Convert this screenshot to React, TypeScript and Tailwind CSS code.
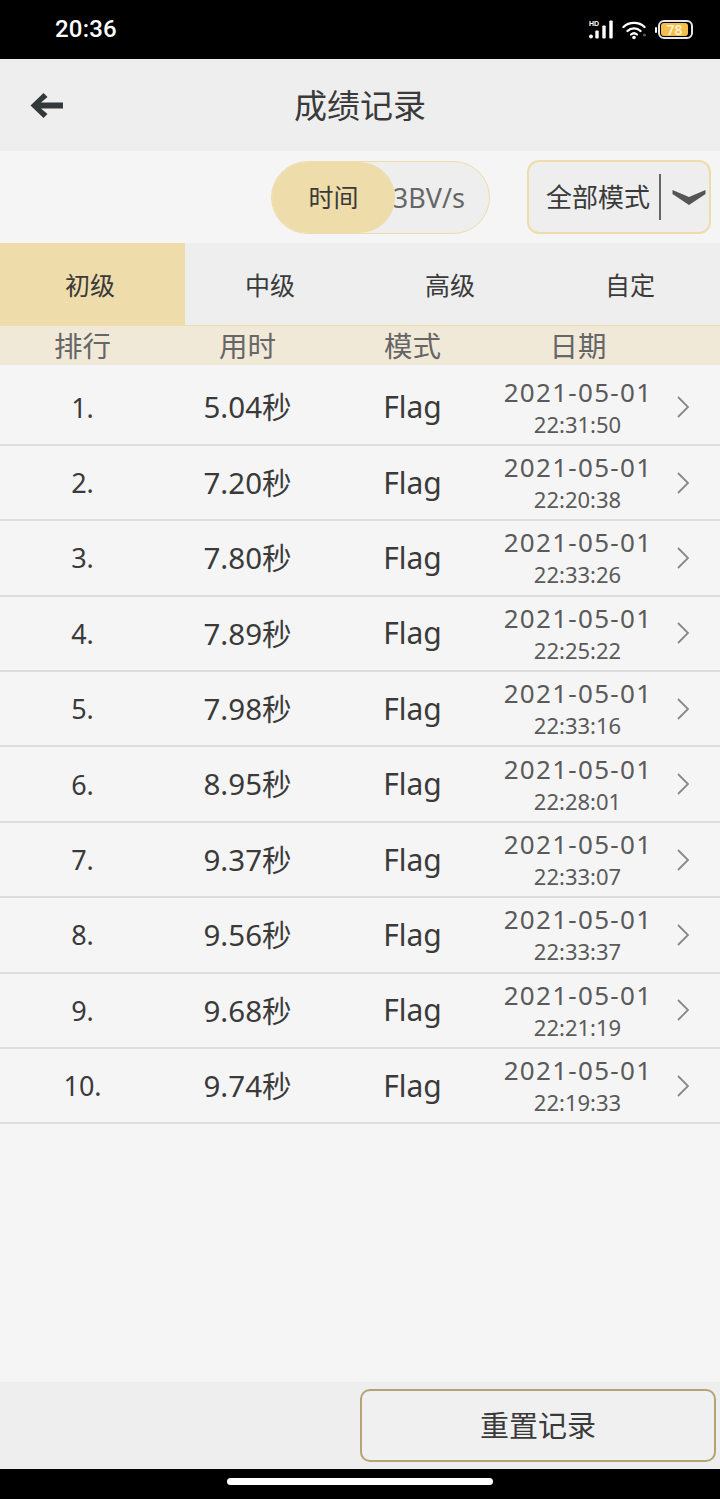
const font = { fontFamily: '"Noto Sans", "Noto Sans CJK SC", sans-serif' };

const rows = [
  ["1.", "5.04秒", "22:31:50"],
  ["2.", "7.20秒", "22:20:38"],
  ["3.", "7.80秒", "22:33:26"],
  ["4.", "7.89秒", "22:25:22"],
  ["5.", "7.98秒", "22:33:16"],
  ["6.", "8.95秒", "22:28:01"],
  ["7.", "9.37秒", "22:33:07"],
  ["8.", "9.56秒", "22:33:37"],
  ["9.", "9.68秒", "22:21:19"],
  ["10.", "9.74秒", "22:19:33"],
];

function StatusIcons() {
  return (
    <div className="flex items-center">
      <svg width="26" height="24" viewBox="0 0 26 24" className="mr-[7px]">
        <text x="0" y="7.5" fill="#fff" fontSize="7" fontWeight="700" fontFamily="Liberation Sans">HD</text>
        <circle cx="2" cy="18.5" r="1.9" fill="#fff" />
        <rect x="6.3" y="12.5" width="3.4" height="8" rx="1" fill="#fff" />
        <rect x="13.3" y="7.5" width="3.4" height="13" rx="1" fill="#fff" />
        <rect x="20.3" y="2.5" width="3.4" height="18" rx="1" fill="#fff" />
      </svg>
      <svg width="26" height="20" viewBox="0 0 26 20" className="mr-[7px]">
        <path d="M1.5 7 C7 1.5 17 1.5 22.5 7" fill="none" stroke="#fff" strokeWidth="2.4" strokeLinecap="round" />
        <path d="M5.5 11 C9 7.5 15 7.5 18.5 11" fill="none" stroke="#fff" strokeWidth="2.4" strokeLinecap="round" />
        <path d="M9 14.5 C10.8 13 13.2 13 15 14.5" fill="none" stroke="#fff" strokeWidth="2.2" strokeLinecap="round" />
        <circle cx="12" cy="17.5" r="1.8" fill="#fff" />
        <circle cx="22.5" cy="15" r="1.6" fill="#555" />
      </svg>
      <div className="w-[2px] h-[6px] rounded-sm bg-white mr-[1px]" />
      <div className="w-[35px] h-[19px] rounded-[6px] border-2 border-[#e8e8e8] p-[1px] flex">
        <div className="w-[27px] h-full rounded-[3px] bg-[#f4bd4c] flex items-center justify-center text-[14px] leading-none font-semibold text-[#fff3d0]">
          78
        </div>
      </div>
    </div>
  );
}

export default function App() {
  return (
    <div className="w-[720px] h-[1499px] flex flex-col bg-[#f5f5f5] overflow-hidden" style={font}>
      <div className="h-[59px] bg-black flex items-center justify-between pl-[55px] pr-[27px] shrink-0">
        <span className="text-white text-[24px] font-medium leading-none tracking-[0.2px] pb-[1px]" style={{ fontFamily: "Roboto, sans-serif" }}>20:36</span>
        <StatusIcons />
      </div>

      <div className="h-[92px] bg-[#eeeeee] relative flex items-center justify-center shrink-0">
        <svg width="36" height="28" viewBox="0 0 36 28" className="absolute left-[29px] top-[33px]">
          <path d="M14.5 1 L1.5 13.5 L14.5 26 L18.5 22 L12 16.5 L34 16.5 L34 10.5 L12 10.5 L18.5 5 Z" fill="#33393b" />
        </svg>
        <span className="text-[33px] leading-none text-[#3a3a3a]">成绩记录</span>
      </div>

      <div className="h-[92px] flex items-center justify-end pr-[9px] shrink-0">
        <div className="relative w-[219px] h-[73px] rounded-full bg-[#eeeeee] border border-[#eedcaa] flex items-center justify-end pr-[24px] mr-[37px]">
          <div className="absolute left-0 top-0 w-[123px] h-[71px] rounded-full bg-[#eedcaa] flex items-center justify-center text-[25px] leading-none text-[#3a3a3a]">时间</div>
          <span className="text-[27px] leading-none text-[#666666] whitespace-nowrap">3BV/s</span>
        </div>
        <div className="w-[184px] h-[74px] rounded-[12px] bg-[#eeeeee] border-2 border-[#eedcaa] flex items-center pl-[17px]">
          <span className="text-[26px] leading-none text-[#3a3a3a] w-[104px] whitespace-nowrap">全部模式</span>
          <div className="w-[2px] h-[46px] bg-[#666666] ml-[9px]" />
          <svg width="34" height="18" viewBox="0 0 34 18" className="ml-[11px]">
            <path d="M0.5 2 L17 9 L33.5 2 L33.5 6 L17 17 L0.5 6 Z" fill="#555555" />
          </svg>
        </div>
      </div>

      <div className="h-[82px] bg-[#eeeeee] grid grid-cols-[185px_170px_190px_175px] shrink-0 text-[25px] leading-none text-[#3a3a3a]">
        <div className="bg-[#eedcaa] flex items-center justify-center pr-[5px] pt-[2px]">初级</div>
        <div className="flex items-center justify-center pt-[2px]">中级</div>
        <div className="flex items-center justify-center pt-[2px]">高级</div>
        <div className="flex items-center justify-center pt-[2px] pr-[5px]">自定</div>
      </div>

      <div className="h-[40px] bg-[#f1e9d8] border-t border-[#eedcaa] grid grid-cols-[165px_165px_165px_165px_60px] items-center shrink-0 text-[28.5px] leading-none text-[#666666] pt-[1px]">
        <div className="text-center">排行</div>
        <div className="text-center">用时</div>
        <div className="text-center">模式</div>
        <div className="text-center pl-[1px]">日期</div>
      </div>

      <div className="flex-1 pt-[5.5px]">
        {rows.map(([rank, time, clock]) => (
          <div key={rank} className="h-[75.4px] border-b-2 border-[#dddddd] grid grid-cols-[165px_165px_165px_165px_60px] items-center text-[#3a3a3a] text-[29.5px] leading-none">
            <div className="text-center text-[27px]">{rank}</div>
            <div className="text-center">{time}</div>
            <div className="text-center text-[30px]">Flag</div>
            <div className="flex flex-col items-center text-[#5a5a5a] pt-[1px]">
              <span className="text-[26px] leading-[32px] tracking-[1.3px] pl-[1px]">2021-05-01</span>
              <span className="text-[22px] leading-[32px]">{clock}</span>
            </div>
            <div className="flex justify-center pr-[14px]">
              <svg width="14" height="22" viewBox="0 0 14 22">
                <path d="M2 1 L12 11 L2 21" fill="none" stroke="#888888" strokeWidth="1.8" />
              </svg>
            </div>
          </div>
        ))}
      </div>

      <div className="h-[87px] bg-[#eeeeee] flex items-center justify-end pr-[4px] shrink-0">
        <div className="w-[356px] h-[73px] rounded-[10px] border-2 border-[#b5a375] bg-[#f0f0f0] flex items-center justify-center text-[29px] leading-none text-[#3a3a3a]">
          重置记录
        </div>
      </div>

      <div className="h-[30px] bg-black flex justify-center pt-[9px] shrink-0">
        <div className="w-[266px] h-[7px] rounded-full bg-white" />
      </div>
    </div>
  );
}
